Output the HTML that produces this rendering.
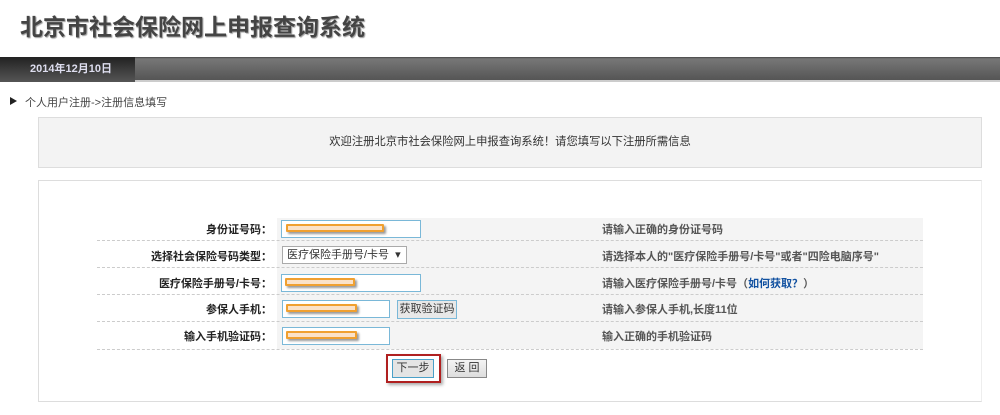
<!DOCTYPE html>
<html><head><meta charset="utf-8"><style>
*{margin:0;padding:0;box-sizing:border-box}
body{width:1000px;height:415px;background:#fff;font-family:"Liberation Sans","Noto Sans CJK SC",sans-serif;font-size:11px;color:#333;position:relative;overflow:hidden}
.a{position:absolute}
.title{left:20px;top:12px;font-size:23px;font-weight:bold;color:#444;line-height:30px;text-shadow:1px 1px 1px #999}
.bar{left:0;top:57px;width:1000px;height:25px;background:linear-gradient(#444 0,#777 8%,#555 100%);border-bottom:2px solid #ccc}
.tab{left:0;top:57px;width:135px;height:25px;background:linear-gradient(#222,#555);color:#dde;font-weight:bold;font-size:11px;line-height:25px;padding-left:30px}
.bc{left:25px;top:94px;font-size:11px;color:#444}
.tri{left:10px;top:97px;width:0;height:0;border-left:7px solid #222;border-top:4px solid transparent;border-bottom:4px solid transparent}
.box1{left:38px;top:117px;width:944px;height:51px;background:#f3f3f3;border:1px solid #ddd;text-align:center;line-height:49px;font-size:11.3px;color:#333}
.box2{left:38px;top:180px;width:944px;height:222px;border:1px solid #ddd;border-right-color:#eee;border-bottom-color:#ddd}
.gray{left:277px;top:218px;width:646px;height:131px;background:#f4f4f4}
.dash{left:97px;width:826px;height:0;border-top:1px dashed #ccc}
.lbl{width:175px;left:97px;text-align:right;font-weight:bold;font-size:11px;color:#222}
.hint{left:602px;font-weight:bold;font-size:11px;color:#555}
.inp{height:18px;border:1px solid #7ab8d8;background:#fff}
.red{height:8px;background:#fbe2c8;border:2px solid #f0a030;box-shadow:2px 2px 2px #999;border-radius:1px}
.btn{height:19px;border:1px solid #888;background:linear-gradient(#f4f4f4,#ddd);font-size:11px;text-align:center;line-height:17px;color:#333}
</style></head><body>
<div class="a title">北京市社会保险网上申报查询系统</div>
<div class="a bar"></div>
<div class="a tab">2014年12月10日</div>
<div class="a tri"></div>
<div class="a bc">个人用户注册-&gt;注册信息填写</div>
<div class="a box1">欢迎注册北京市社会保险网上申报查询系统！请您填写以下注册所需信息</div>
<div class="a box2"></div>
<div class="a gray"></div>
<div class="a dash" style="top:240px"></div>
<div class="a dash" style="top:267px"></div>
<div class="a dash" style="top:294px"></div>
<div class="a dash" style="top:321px"></div>
<div class="a dash" style="top:349px"></div>

<div class="a lbl" style="top:221px">身份证号码：</div>
<div class="a inp" style="left:281px;top:220px;width:140px"></div>
<div class="a red" style="left:286px;top:224px;width:98px"></div>
<div class="a hint" style="top:221px">请输入正确的身份证号码</div>

<div class="a lbl" style="top:248px">选择社会保险号码类型：</div>
<div class="a" style="left:282px;top:246px;width:125px;height:18px;border:1px solid #aaa;background:#fff;font-size:11px;line-height:16px;padding-left:4px">医疗保险手册号/卡号 &nbsp;▾</div>
<div class="a hint" style="top:248px">请选择本人的"医疗保险手册号/卡号"或者"四险电脑序号"</div>

<div class="a lbl" style="top:275px">医疗保险手册号/卡号：</div>
<div class="a inp" style="left:281px;top:274px;width:140px"></div>
<div class="a red" style="left:285px;top:278px;width:70px"></div>
<div class="a hint" style="top:275px">请输入医疗保险手册号/卡号（<span style="color:#1050a0">如何获取？</span>）</div>

<div class="a lbl" style="top:301px">参保人手机：</div>
<div class="a inp" style="left:282px;top:300px;width:108px"></div>
<div class="a red" style="left:286px;top:304px;width:71px"></div>
<div class="a btn" style="left:397px;top:300px;width:60px;border-color:#7ab8d8;background:#e8e8e8">获取验证码</div>
<div class="a hint" style="top:301px">请输入参保人手机,长度11位</div>

<div class="a lbl" style="top:328px">输入手机验证码：</div>
<div class="a inp" style="left:282px;top:327px;width:108px"></div>
<div class="a red" style="left:286px;top:331px;width:71px"></div>
<div class="a hint" style="top:328px">输入正确的手机验证码</div>

<div class="a" style="left:386px;top:354px;width:55px;height:29px;border:2px solid #b02020;box-shadow:2px 2px 3px #aaa"></div>
<div class="a btn" style="left:392px;top:359px;width:42px;border-color:#4aa0c8;background:#e4e4e4">下一步</div>
<div class="a btn" style="left:447px;top:359px;width:40px">返 回</div>
</body></html>
